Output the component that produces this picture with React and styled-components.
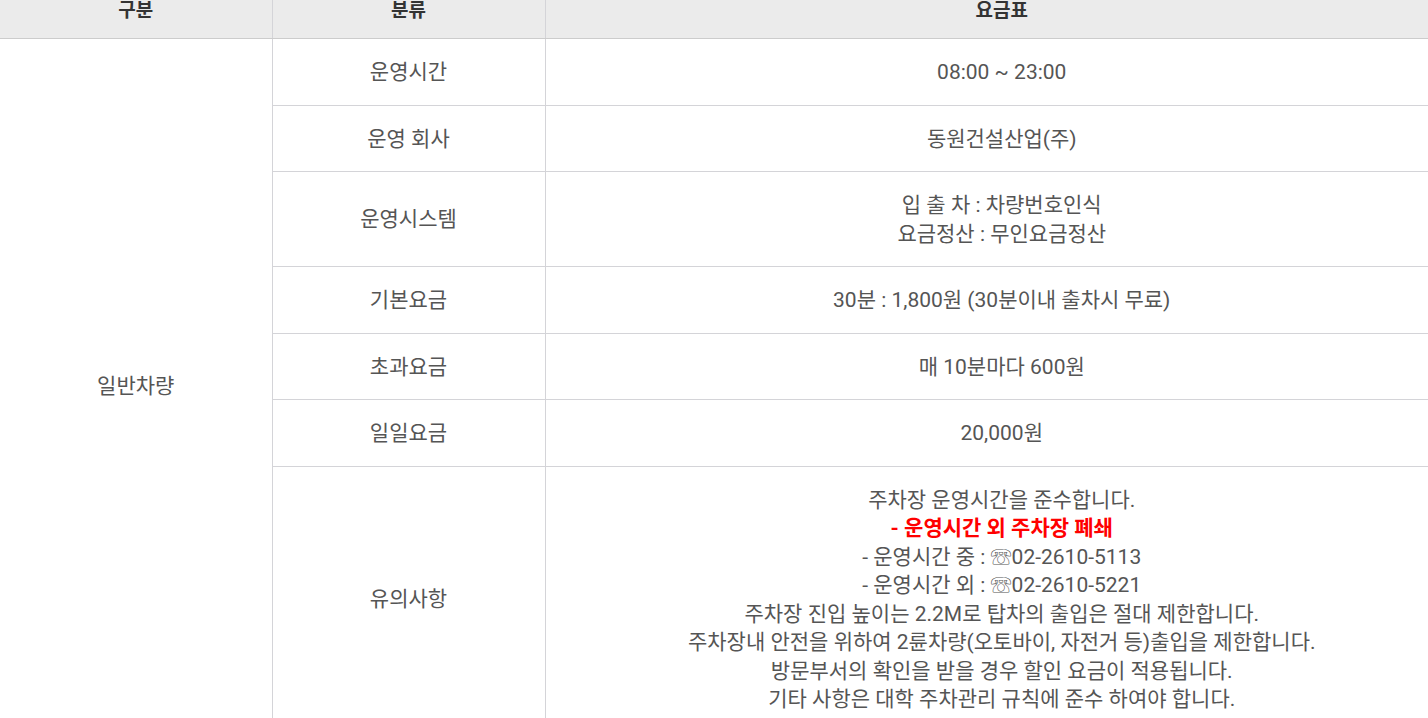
import React from 'react';
import styled, {createGlobalStyle} from 'styled-components';

const GlobalStyle = createGlobalStyle`
  html, body {
    margin: 0;
    padding: 0;
    background: #fff;
    overflow: hidden;
  }
  body {
    font-family: Roboto, "Noto Sans CJK KR", sans-serif;
  }
`;

// the page is scrolled a bit: the header row is cut at the top and
// the last column runs past the right edge
const Viewport = styled.div`
  width: 1428px;
  height: 718px;
  overflow: hidden;
`;

const Table = styled.table`
  margin-top: -21px;
  width: 1458px;
  border-collapse: collapse;
  table-layout: fixed;
  font-size: 21px;
  color: #555;
  text-align: center;
`;

const Head = styled.th`
  height: 59px;
  padding: 0;
  background: #ebebeb;
  color: #333;
  font-size: 19px;
  font-weight: 700;
  border-bottom: 1px solid #ccc;
  border-left: ${props => props.first ? 'none' : '1px solid #d4d4d8'};
`;

const Cell = styled.td`
  padding: 19px 10px 18px;
  line-height: 28.5px;
  border-bottom: 1px solid #d4d4d8;
  border-left: ${props => props.first ? 'none' : '1px solid #d4d4d8'};
  vertical-align: middle;
`;

const Warn = styled.span`
  color: #f00;
  font-weight: 700;
`;

const rows = [
  {label: '운영시간', value: ['08:00 ~ 23:00']},
  {label: '운영 회사', value: ['동원건설산업(주)']},
  {label: '운영시스템', value: ['입 출 차 : 차량번호인식', '요금정산 : 무인요금정산']},
  {label: '기본요금', value: ['30분 : 1,800원 (30분이내 출차시 무료)']},
  {label: '초과요금', value: ['매 10분마다 600원']},
  {label: '일일요금', value: ['20,000원']},
];

const notice = [
  '주차장 운영시간을 준수합니다.',
  <Warn key='w'>- 운영시간 외 주차장 폐쇄</Warn>,
  '- 운영시간 중 : ☏02-2610-5113',
  '- 운영시간 외 : ☏02-2610-5221',
  '주차장 진입 높이는 2.2M로 탑차의 출입은 절대 제한합니다.',
  '주차장내 안전을 위하여 2륜차량(오토바이, 자전거 등)출입을 제한합니다.',
  '방문부서의 확인을 받을 경우 할인 요금이 적용됩니다.',
  '기타 사항은 대학 주차관리 규칙에 준수 하여야 합니다.',
];

const Lines = ({list}) => list.map((line, i) => (
  <React.Fragment key={i}>
    {i > 0 && <br />}
    {line}
  </React.Fragment>
));

export default function App() {
  return (
    <Viewport>
      <GlobalStyle />
      <Table>
        <colgroup>
          <col style={{width: 272}} />
          <col style={{width: 273}} />
          <col />
        </colgroup>
        <thead>
          <tr>
            <Head first>구분</Head>
            <Head>분류</Head>
            <Head>요금표</Head>
          </tr>
        </thead>
        <tbody>
          {rows.map((row, i) => (
            <tr key={row.label}>
              {i === 0 && <Cell first rowSpan={rows.length + 1}>일반차량</Cell>}
              <Cell>{row.label}</Cell>
              <Cell><Lines list={row.value} /></Cell>
            </tr>
          ))}
          <tr>
            <Cell>유의사항</Cell>
            <Cell><Lines list={notice} /></Cell>
          </tr>
        </tbody>
      </Table>
    </Viewport>
  );
}
